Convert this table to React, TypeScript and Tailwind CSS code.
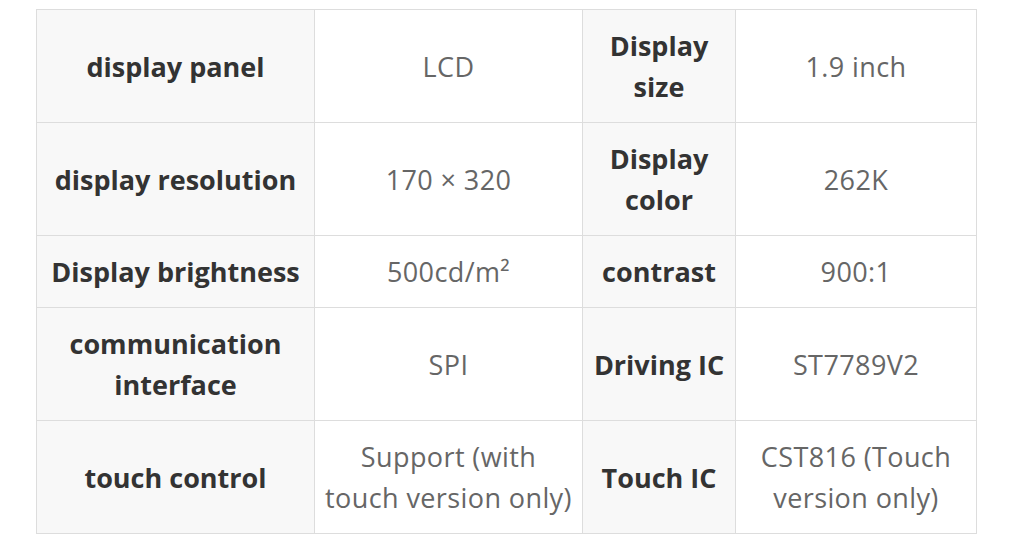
import React from "react";

const rows: [string, string, string, string][] = [
  ["display panel", "LCD", "Display size", "1.9 inch"],
  ["display resolution", "170 × 320", "Display color", "262K"],
  ["Display brightness", "500cd/m²", "contrast", "900:1"],
  ["communication interface", "SPI", "Driving IC", "ST7789V2"],
  ["touch control", "Support (with touch version only)", "Touch IC", "CST816 (Touch version only)"],
];

export default function App() {
  return (
    <div className="w-[1014px] h-[546px] bg-white pt-[9px] pl-[36px]" style={{ fontFamily: '"Open Sans", "Noto Sans", sans-serif' }}>
      <table className="table-fixed border-collapse w-[940px] text-[27px] leading-[41px]">
        <colgroup>
          <col className="w-[278px]" />
          <col className="w-[268px]" />
          <col className="w-[153px]" />
          <col className="w-[241px]" />
        </colgroup>
        <tbody>
          {rows.map((r, i) => (
            <tr key={i}>
              <td className="border border-[#dddddd] bg-[#f8f8f8] text-[#333333] font-bold text-center align-middle px-[4px] py-[15px]">{r[0]}</td>
              <td className="border border-[#dddddd] bg-white text-[#666666] tracking-[0.4px] text-center align-middle px-[8px] py-[15px]">{r[1]}</td>
              <td className="border border-[#dddddd] bg-[#f8f8f8] text-[#333333] font-bold text-center align-middle px-[4px] py-[15px]">{r[2]}</td>
              <td className="border border-[#dddddd] bg-white text-[#666666] tracking-[0.4px] text-center align-middle px-[8px] py-[15px]">{r[3]}</td>
            </tr>
          ))}
        </tbody>
      </table>
    </div>
  );
}
